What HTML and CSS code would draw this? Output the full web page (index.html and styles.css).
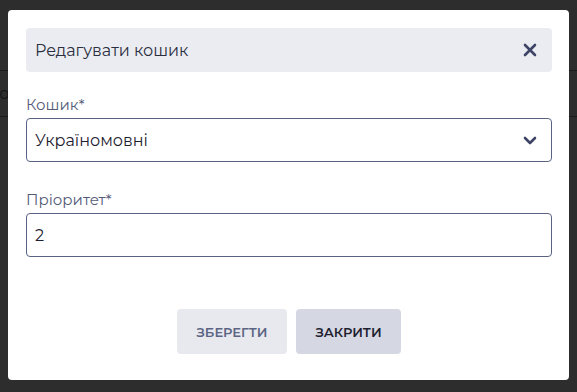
FILE: index.html
```html
<!DOCTYPE html>
<html>
<head>
  <title>Редагувати кошик</title>
  <link rel="stylesheet" href="styles.css">
</head>
<body>
  <div class="page">
    <div class="page-top"></div>
    <div class="page-row"><span class="page-cell">Пор</span></div>
  </div>

  <div class="overlay">
    <div class="modal">
      <div class="modal-header">
        <span class="modal-title">Редагувати кошик</span>
        <button class="close-btn" type="button">
          <svg width="14" height="14" viewBox="0 0 14 14">
            <path d="M2 2 L12 12 M12 2 L2 12" stroke="#3d4466" stroke-width="2.6" stroke-linecap="round" fill="none"/>
          </svg>
        </button>
      </div>

      <div class="field">
        <label class="field-label">Кошик*</label>
        <div class="select">
          <span class="select-value">Україномовні</span>
          <svg class="chevron" width="14" height="9" viewBox="0 0 14 9">
            <path d="M2 2 L7 7 L12 2" stroke="#3d4466" stroke-width="2.6" stroke-linecap="round" stroke-linejoin="round" fill="none"/>
          </svg>
        </div>
      </div>

      <div class="field">
        <label class="field-label">Пріоритет*</label>
        <input class="text-input" type="text" value="2">
      </div>

      <div class="actions">
        <button class="btn btn-save" type="button">Зберегти</button>
        <button class="btn btn-close" type="button">Закрити</button>
      </div>
    </div>
  </div>
</body>
</html>
```

FILE: styles.css
```css
* {
  box-sizing: border-box;
}
body {
  margin: 0;
  background-color: #2d2d2d;
  font-family: "Montserrat", Inter, "Noto Sans", sans-serif;
  height: 392px;
  overflow: hidden;
}
.page {
  color: #111;
}
.page-top {
  height: 71px;
  border-bottom: 1px solid #1b1b1b;
}
.page-row {
  height: 46px;
  border-bottom: 1px solid #1b1b1b;
  display: flex;
  align-items: center;
}
.page-cell {
  margin-left: -14px;
  font-size: 16px;
  color: #141414;
}
.overlay {
  position: fixed;
  top: 0;
  left: 0;
  right: 0;
  bottom: 0;
  display: flex;
  justify-content: center;
  align-items: flex-start;
  padding-top: 10px;
}
.modal {
  width: 561px;
  height: 370px;
  background-color: #fff;
  border-radius: 4px;
  padding: 18px 17px 26px 18px;
  display: flex;
  flex-direction: column;
}
.modal-header {
  height: 44px;
  background-color: #ebecf1;
  border-radius: 4px;
  display: flex;
  align-items: center;
  justify-content: space-between;
  padding: 0 15px 0 9px;
}
.modal-title {
  font-size: 16px;
  color: #2a2e3f;
}
.close-btn {
  border: none;
  background: none;
  padding: 0;
  display: flex;
  cursor: pointer;
}
.field {
  display: flex;
  flex-direction: column;
}
.modal-header + .field {
  margin-top: 23px;
}
.field + .field {
  margin-top: 28px;
}
.field-label {
  font-size: 15px;
  line-height: 19px;
  color: #535b78;
  margin-bottom: 4px;
}
.select,
.text-input {
  height: 44px;
  border: 1px solid #5a6384;
  border-radius: 4px;
  padding: 0 14px 0 8px;
  font-family: inherit;
  font-size: 16px;
  color: #1d2030;
}
.select {
  display: flex;
  align-items: center;
  justify-content: space-between;
}
.text-input {
  width: 100%;
  outline: none;
}
.actions {
  margin-top: auto;
  display: flex;
  justify-content: center;
  gap: 9px;
}
.btn {
  height: 45px;
  border: none;
  border-radius: 4px;
  font-family: inherit;
  font-size: 13px;
  font-weight: 600;
  text-transform: uppercase;
  cursor: pointer;
}
.btn-save {
  width: 110px;
  background-color: #e8e9ef;
  color: #5b6583;
}
.btn-close {
  width: 105px;
  background-color: #d5d8e2;
  color: #1e2030;
}
```
